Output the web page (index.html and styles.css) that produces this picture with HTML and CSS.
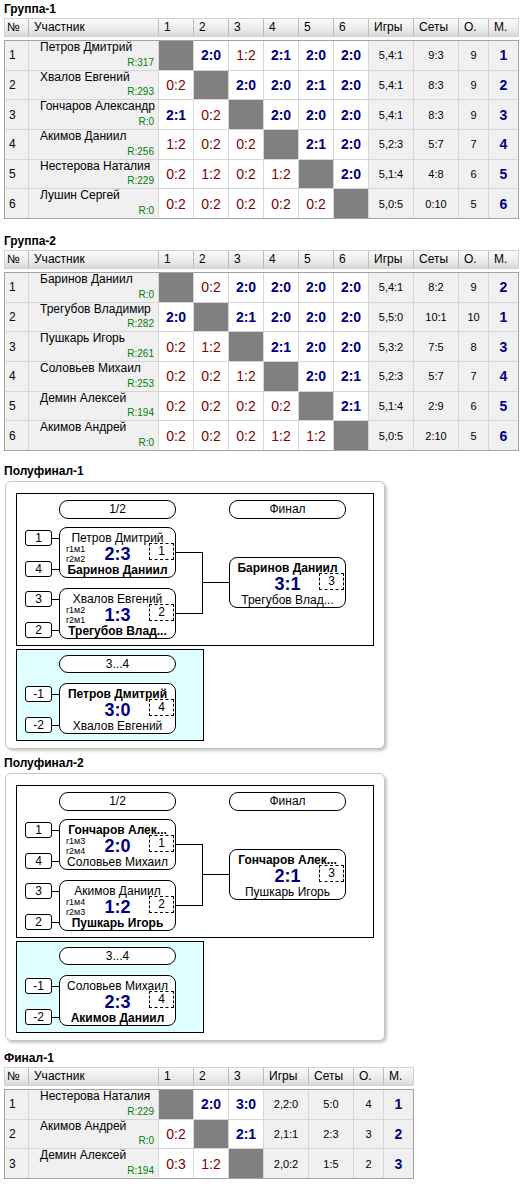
FILE: index.html
```html
<!DOCTYPE html>
<html lang="ru">
<head>
    <meta charset="UTF-8">
    <title>Турнир</title>
    <link rel="stylesheet" href="styles.css">
</head>
<body>

<div class="title first">Группа-1</div>
<div class="tbl tbl-6" id="group1"></div>

<div class="title">Группа-2</div>
<div class="tbl tbl-6" id="group2"></div>

<div class="title stage">Полуфинал-1</div>
<div class="bracket-box">
    <div class="bracket-main">
        <div class="pill">1/2</div>
        <div class="pill pill-final">Финал</div>

        <div class="seed seed-a">1</div><div class="hline in-a"></div>
        <div class="seed seed-b">4</div><div class="hline in-b"></div>
        <div class="seed seed-c">3</div><div class="hline in-c"></div>
        <div class="seed seed-d">2</div><div class="hline in-d"></div>

        <div class="match match-a">
            <div class="m-name">Петров Дмитрий</div>
            <div class="m-score">2:3</div>
            <div class="m-name bold">Баринов Даниил</div>
            <span class="tag tag-1">r1м1</span><span class="tag tag-2">r2м2</span>
            <span class="slot">1</span>
        </div>
        <div class="match match-b">
            <div class="m-name">Хвалов Евгений</div>
            <div class="m-score">1:3</div>
            <div class="m-name bold">Трегубов Влад...</div>
            <span class="tag tag-1">r1м2</span><span class="tag tag-2">r2м1</span>
            <span class="slot">2</span>
        </div>

        <div class="hline out-a"></div>
        <div class="hline out-b"></div>
        <div class="vline join"></div>
        <div class="hline to-final"></div>

        <div class="match match-final">
            <div class="m-name bold">Баринов Даниил</div>
            <div class="m-score">3:1</div>
            <div class="m-name">Трегубов Влад...</div>
            <span class="slot">3</span>
        </div>
    </div>
    <div class="bracket-third">
        <div class="pill">3...4</div>
        <div class="seed seed-a">-1</div><div class="hline in-a"></div>
        <div class="seed seed-b">-2</div><div class="hline in-b"></div>
        <div class="match match-a">
            <div class="m-name bold">Петров Дмитрий</div>
            <div class="m-score">3:0</div>
            <div class="m-name">Хвалов Евгений</div>
            <span class="slot">4</span>
        </div>
    </div>
</div>

<div class="title stage">Полуфинал-2</div>
<div class="bracket-box">
    <div class="bracket-main">
        <div class="pill">1/2</div>
        <div class="pill pill-final">Финал</div>

        <div class="seed seed-a">1</div><div class="hline in-a"></div>
        <div class="seed seed-b">4</div><div class="hline in-b"></div>
        <div class="seed seed-c">3</div><div class="hline in-c"></div>
        <div class="seed seed-d">2</div><div class="hline in-d"></div>

        <div class="match match-a">
            <div class="m-name bold">Гончаров Алек...</div>
            <div class="m-score">2:0</div>
            <div class="m-name">Соловьев Михаил</div>
            <span class="tag tag-1">r1м3</span><span class="tag tag-2">r2м4</span>
            <span class="slot">1</span>
        </div>
        <div class="match match-b">
            <div class="m-name">Акимов Даниил</div>
            <div class="m-score">1:2</div>
            <div class="m-name bold">Пушкарь Игорь</div>
            <span class="tag tag-1">r1м4</span><span class="tag tag-2">r2м3</span>
            <span class="slot">2</span>
        </div>

        <div class="hline out-a"></div>
        <div class="hline out-b"></div>
        <div class="vline join"></div>
        <div class="hline to-final"></div>

        <div class="match match-final">
            <div class="m-name bold">Гончаров Алек...</div>
            <div class="m-score">2:1</div>
            <div class="m-name">Пушкарь Игорь</div>
            <span class="slot">3</span>
        </div>
    </div>
    <div class="bracket-third">
        <div class="pill">3...4</div>
        <div class="seed seed-a">-1</div><div class="hline in-a"></div>
        <div class="seed seed-b">-2</div><div class="hline in-b"></div>
        <div class="match match-a">
            <div class="m-name">Соловьев Михаил</div>
            <div class="m-score">2:3</div>
            <div class="m-name bold">Акимов Даниил</div>
            <span class="slot">4</span>
        </div>
    </div>
</div>

<div class="title last">Финал-1</div>
<div class="tbl tbl-3" id="final1"></div>

<script>
    // Construire un tableau de groupe : [nom, rating, scores, jeux, sets, points, place]
    function buildTable(id, rows) {
        let head = '<div class="head"><div>№</div><div>Участник</div>';
        for (let i = 1; i <= rows.length; i++) {
            head += `<div>${i}</div>`;
        }
        head += '<div>Игры</div><div>Сеты</div><div>О.</div><div>М.</div></div>';

        let body = '<div class="body">';
        rows.forEach((r, idx) => {
            body += `<div class="num">${idx + 1}</div>`;
            body += `<div class="name"><span>${r[0]}</span><span class="rating">R:${r[1]}</span></div>`;
            r[2].forEach(s => {
                if (s === '') {
                    body += '<div class="self"></div>';
                } else {
                    const p = s.split(':');
                    const cls = Number(p[0]) > Number(p[1]) ? 'win' : 'loss';
                    body += `<div class="score ${cls}">${s}</div>`;
                }
            });
            body += `<div class="stat">${r[3]}</div><div class="stat">${r[4]}</div><div class="stat">${r[5]}</div>`;
            body += `<div class="place">${r[6]}</div>`;
        });
        body += '</div>';

        document.getElementById(id).innerHTML = head + body;
    }

    buildTable('group1', [
        ['Петров Дмитрий', 317, ['', '2:0', '1:2', '2:1', '2:0', '2:0'], '5,4:1', '9:3', 9, 1],
        ['Хвалов Евгений', 293, ['0:2', '', '2:0', '2:0', '2:1', '2:0'], '5,4:1', '8:3', 9, 2],
        ['Гончаров Александр', 0, ['2:1', '0:2', '', '2:0', '2:0', '2:0'], '5,4:1', '8:3', 9, 3],
        ['Акимов Даниил', 256, ['1:2', '0:2', '0:2', '', '2:1', '2:0'], '5,2:3', '5:7', 7, 4],
        ['Нестерова Наталия', 229, ['0:2', '1:2', '0:2', '1:2', '', '2:0'], '5,1:4', '4:8', 6, 5],
        ['Лушин Сергей', 0, ['0:2', '0:2', '0:2', '0:2', '0:2', ''], '5,0:5', '0:10', 5, 6]
    ]);

    buildTable('group2', [
        ['Баринов Даниил', 0, ['', '0:2', '2:0', '2:0', '2:0', '2:0'], '5,4:1', '8:2', 9, 2],
        ['Трегубов Владимир', 282, ['2:0', '', '2:1', '2:0', '2:0', '2:0'], '5,5:0', '10:1', 10, 1],
        ['Пушкарь Игорь', 261, ['0:2', '1:2', '', '2:1', '2:0', '2:0'], '5,3:2', '7:5', 8, 3],
        ['Соловьев Михаил', 253, ['0:2', '0:2', '1:2', '', '2:0', '2:1'], '5,2:3', '5:7', 7, 4],
        ['Демин Алексей', 194, ['0:2', '0:2', '0:2', '0:2', '', '2:1'], '5,1:4', '2:9', 6, 5],
        ['Акимов Андрей', 0, ['0:2', '0:2', '0:2', '1:2', '1:2', ''], '5,0:5', '2:10', 5, 6]
    ]);

    buildTable('final1', [
        ['Нестерова Наталия', 229, ['', '2:0', '3:0'], '2,2:0', '5:0', 4, 1],
        ['Акимов Андрей', 0, ['0:2', '', '2:1'], '2,1:1', '2:3', 3, 2],
        ['Демин Алексей', 194, ['0:3', '1:2', ''], '2,0:2', '1:5', 2, 3]
    ]);
</script>

</body>
</html>
```

FILE: styles.css
```css
body {
    margin: 0;
    padding: 2px 4px;
    font-family: "Liberation Sans", Arial, sans-serif;
    font-size: 12px;
    color: #000;
    background-color: #fff;
}

/* Titres des sections */
.title {
    font-weight: bold;
    line-height: 15px;
    margin: 15px 0 1px;
}
.title.first { margin-top: 0; }
.title.stage { margin: 13px 0 2px; }
.bracket-box + .title.stage { margin-top: 7px; }
.title.last { margin-top: 10px; }

/* Tableaux de groupe */
.head,
.body {
    display: grid;
    gap: 1px;
    width: max-content;
}
.tbl-6 .head,
.tbl-6 .body {
    grid-template-columns: 23px 129px repeat(6, 34px) 44px 44px 29px 29px;
}
.tbl-3 .head,
.tbl-3 .body {
    grid-template-columns: 23px 129px repeat(3, 34px) 44px 44px 29px 29px;
}
.head {
    background-color: #bdbdbd;
    border: 1px solid #d2d2d2;
    margin-bottom: 3px;
}
.head div {
    height: 17px;
    line-height: 17px;
    padding-left: 5px;
    background: linear-gradient(#fbfbfb, #ebebeb 55%, #dadada);
}
.head div:first-child { padding-left: 2px; }

.body {
    background-color: #d6d6d6;
    border: 1px solid #a3a3a3;
    grid-auto-rows: 28.67px;
}
.num,
.name,
.stat,
.place {
    background-color: #f0f0f0;
}
.num {
    display: flex;
    align-items: center;
    padding-left: 4px;
}
.name {
    display: flex;
    flex-direction: column;
    justify-content: space-between;
    padding: 0 4px 1px 11px;
    line-height: 13px;
    white-space: nowrap;
}
.rating {
    align-self: flex-end;
    font-size: 10px;
    line-height: 12px;
    color: #008000;
}
.score,
.stat,
.place {
    display: flex;
    align-items: center;
    justify-content: center;
}
.score {
    background-color: #fff;
    font-size: 14px;
}
.win {
    color: #000080;
    font-weight: bold;
}
.loss { color: #800000; }
.self { background-color: #808080; }
.stat { font-size: 11px; }
.place {
    color: #000080;
    font-weight: bold;
    font-size: 14px;
}

/* Tableaux a elimination (schema) */
.bracket-box {
    width: 380px;
    height: 268px;
    box-sizing: border-box;
    margin-left: 1px;
    padding: 11px 0 0 10px;
    border: 1px solid #c6c6c6;
    border-radius: 6px;
    background-color: #fff;
    box-shadow: 2px 2px 3px rgba(0, 0, 0, 0.22);
}
.bracket-main,
.bracket-third {
    position: relative;
    box-sizing: border-box;
    border: 1px solid #000;
}
.bracket-main {
    width: 358px;
    height: 153px;
}
.bracket-third {
    width: 188px;
    height: 92px;
    margin-top: 3px;
    background-color: #e0ffff;
}

.pill {
    position: absolute;
    left: 42px;
    top: 6px;
    width: 117px;
    height: 19px;
    box-sizing: border-box;
    border: 1px solid #000;
    border-radius: 9px;
    background-color: #fff;
    text-align: center;
    line-height: 17px;
}
.pill-final { left: 212px; }
.bracket-third .pill {
    top: 5px;
    height: 18px;
    line-height: 16px;
}

.seed {
    position: absolute;
    left: 8px;
    width: 27px;
    height: 16px;
    box-sizing: border-box;
    border: 1px solid #000;
    border-radius: 3px;
    background-color: #fff;
    text-align: center;
    line-height: 14px;
}
.seed-a { top: 36px; }
.seed-b { top: 67px; }
.seed-c { top: 97px; }
.seed-d { top: 128px; }

.hline {
    position: absolute;
    height: 1px;
    background-color: #000;
}
.vline {
    position: absolute;
    width: 1px;
    background-color: #000;
}
.in-a, .in-b, .in-c, .in-d { left: 35px; width: 7px; }
.in-a { top: 44px; }
.in-b { top: 75px; }
.in-c { top: 105px; }
.in-d { top: 136px; }
.out-a, .out-b { left: 159px; width: 26px; }
.out-a { top: 58px; }
.out-b { top: 119px; }
.join { left: 185px; top: 58px; height: 62px; }
.to-final { left: 185px; top: 88px; width: 27px; }

.match {
    position: absolute;
    left: 42px;
    width: 117px;
    height: 51px;
    box-sizing: border-box;
    padding-top: 4px;
    border: 1px solid #000;
    border-radius: 8px;
    background-color: #fff;
    text-align: center;
}
.match-a { top: 33px; }
.match-b { top: 94px; }
.match-final { left: 212px; top: 63px; }

.m-name {
    height: 13px;
    line-height: 13px;
    white-space: nowrap;
    overflow: hidden;
}
.m-name.bold { font-weight: bold; }
.m-score {
    height: 19px;
    line-height: 19px;
    font-size: 18px;
    font-weight: bold;
    color: #000080;
}
.tag {
    position: absolute;
    left: 6px;
    font-size: 9px;
    line-height: 9px;
}
.tag-1 { top: 17px; }
.tag-2 { top: 27px; }
.slot {
    position: absolute;
    right: 1px;
    top: 15px;
    width: 25px;
    height: 17px;
    box-sizing: border-box;
    border: 1px dashed #000;
    line-height: 15px;
    text-align: center;
}
```
